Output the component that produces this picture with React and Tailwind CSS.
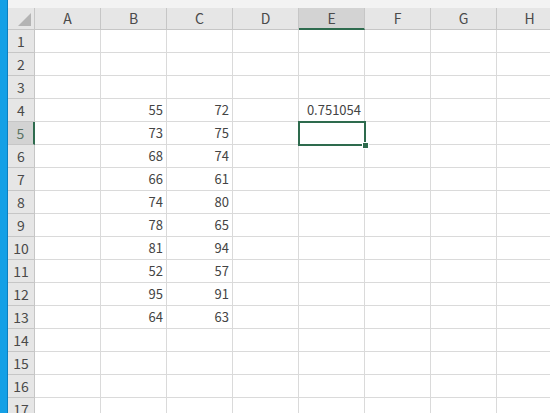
const cols = ['A', 'B', 'C', 'D', 'E', 'F', 'G', 'H'];

const data = {
  4: { B: '55', C: '72', E: '0.751054' },
  5: { B: '73', C: '75' },
  6: { B: '68', C: '74' },
  7: { B: '66', C: '61' },
  8: { B: '74', C: '80' },
  9: { B: '78', C: '65' },
  10: { B: '81', C: '94' },
  11: { B: '52', C: '57' },
  12: { B: '95', C: '91' },
  13: { B: '64', C: '63' },
};

const rows = Array.from({ length: 17 }, (_, i) => i + 1);

export default function App() {
  return (
    <div
      className="flex h-[413px] w-[550px] overflow-hidden bg-white text-[13px] text-[#444]"
      style={{ fontFamily: '"Noto Sans CJK JP", "Liberation Sans", sans-serif' }}
    >
      <div className="w-[8px] shrink-0 border-r border-[#0b7fc0] bg-[#14a0e6]" />
      <div className="flex flex-col">
        <div className="h-[8px] shrink-0 bg-[#f3f3f3]" />
        <div className="grid grid-cols-[27px_repeat(8,66px)] grid-rows-[22px] auto-rows-[23px]">
          <div className="flex items-end justify-end border-r border-b border-[#c6c6c6] bg-[#e6e6e6] p-[3px]">
            <svg width="13" height="13" viewBox="0 0 13 13">
              <polygon points="13,0 13,13 0,13" fill="#b4b4b4" />
            </svg>
          </div>
          {cols.map((c) =>
            c === 'E' ? (
              <div
                key={c}
                className="flex items-center justify-center border-r border-b-2 border-r-[#c6c6c6] border-b-[#2e6b4e] bg-[#d3d3d3] text-[14px] text-[#4a4a4a]"
              >
                {c}
              </div>
            ) : (
              <div
                key={c}
                className="flex items-center justify-center border-r border-b border-[#c6c6c6] bg-[#e6e6e6] text-[14px] text-[#4a4a4a]"
              >
                {c}
              </div>
            )
          )}
          {rows.map((r) => (
            <RowCells key={r} r={r} />
          ))}
        </div>
      </div>
    </div>
  );
}

function RowCells({ r }) {
  const vals = data[r] || {};
  return (
    <>
      {r === 5 ? (
        <div className="flex items-center justify-center border-r-2 border-b border-r-[#2e6b4e] border-b-[#c6c6c6] bg-[#d3d3d3] text-[14px] text-[#5b7365]">
          {r}
        </div>
      ) : (
        <div className="flex items-center justify-center border-r border-b border-[#c6c6c6] bg-[#e6e6e6] text-[14px] text-[#4a4a4a]">
          {r}
        </div>
      )}
      {cols.map((c) => (
        <div
          key={c}
          className="relative flex items-center justify-end border-r border-b border-[#dadada] pr-[3px]"
        >
          {vals[c]}
          {r === 5 && c === 'E' && (
            <div className="absolute -top-[1px] -left-[1px] z-10 h-[25px] w-[68px] border-2 border-[#2e6b4e]">
              <div className="absolute -right-[5px] -bottom-[5px] h-[7px] w-[7px] border border-white bg-[#2e6b4e]" />
            </div>
          )}
        </div>
      ))}
    </>
  );
}
